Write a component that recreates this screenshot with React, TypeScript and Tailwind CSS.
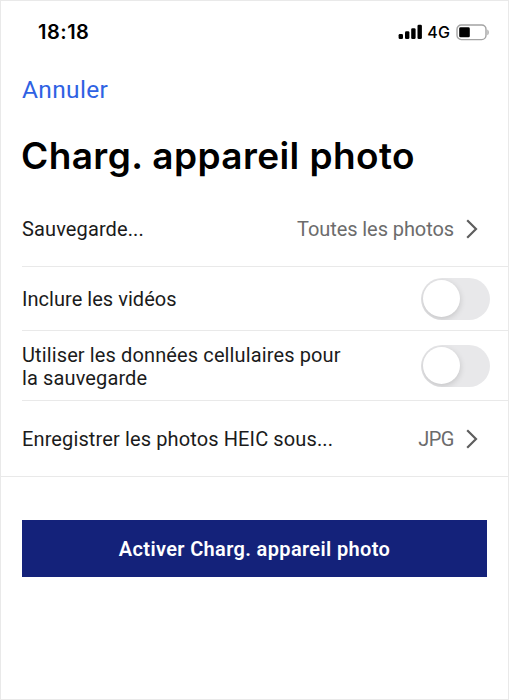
import { useState } from "react";

interface SwitchProps {
  checked: boolean;
  label: string;
  onChange: () => void;
}

const StatusBar = () => (
  <div className="flex h-[62px] items-center justify-between pr-[18px] pl-[37px] font-['Inter'] text-black">
    <span className="text-[20px] leading-none font-semibold tracking-[0.5px]">18:18</span>
    <div className="flex items-center">
      <svg width="25" height="16" viewBox="0 0 25 16" fill="currentColor">
        <rect x="0.6" y="10" width="4.4" height="5" rx="1.3" />
        <rect x="7" y="7.3" width="4.4" height="7.7" rx="1.3" />
        <rect x="13.2" y="4.2" width="4.4" height="10.8" rx="1.3" />
        <rect x="19.5" y="0.8" width="4.4" height="14.2" rx="1.3" />
      </svg>
      <span className="ml-[4px] text-[16px] leading-none font-medium">4G</span>
      <svg className="ml-[6px]" width="34" height="17" viewBox="0 0 34 17">
        <rect x="1" y="1" width="29" height="14.6" rx="4.3" fill="none" stroke="#a3a3a3" strokeWidth="1.4" />
        <rect x="3.2" y="3.3" width="10.6" height="10" rx="1.4" fill="#000" />
        <path d="M31.4 5.4c1.8.8 1.8 5 0 5.8z" fill="#a3a3a3" />
      </svg>
    </div>
  </div>
);

const Chevron = () => (
  <svg width="14" height="22" viewBox="0 0 14 22" fill="none" stroke="#5e5e5e" strokeWidth="2.2">
    <path d="M2.2 2.2 11 11 2.2 19.8" />
  </svg>
);

const Switch = ({ checked, label, onChange }: SwitchProps) => (
  <button
    role="switch"
    aria-checked={checked}
    aria-label={label}
    onClick={onChange}
    className={`flex h-[42px] w-[69px] shrink-0 items-center overflow-hidden rounded-full px-[2px] ${
      checked ? "justify-end bg-[#14227a]" : "bg-[#e8e8ea]"
    }`}
  >
    <span className="h-[37px] w-[37px] rounded-full bg-white shadow-[0_2px_6px_rgba(0,0,0,0.16)]" />
  </button>
);

export default function App() {
  const [videos, setVideos] = useState(false);
  const [cellular, setCellular] = useState(false);

  return (
    <div className="h-[700px] w-[509px] border border-[#e9e9e9] bg-white font-['Roboto',sans-serif] text-[20px] tracking-[0.12px] text-[#1b1b1b]">
      <StatusBar />

      <div className="flex h-[54px] items-center pl-[21px]">
        <button className="text-[24.5px] leading-none tracking-[0.35px] text-[#2f62e3]">Annuler</button>
      </div>
      <h1 className="flex h-[76px] items-center pl-[20px] font-['Inter'] text-[37px] leading-none font-semibold tracking-[0.4px] whitespace-nowrap text-black">
        Charg. appareil photo
      </h1>

      <div className="pl-[21px]">
        <div className="flex h-[74px] items-center justify-between border-b border-[#e9e9e9] pr-[29px] pb-[2px]">
          <span>Sauvegarde...</span>
          <div className="flex items-center gap-[11px] text-[#6c6c6c]">
            <span className="tracking-[-0.08px]">Toutes les photos</span>
            <Chevron />
          </div>
        </div>
        <div className="flex h-[64px] items-center justify-between border-b border-[#e9e9e9] pr-[18px]">
          <span className="pt-px tracking-[0.04px]">Inclure les vidéos</span>
          <Switch checked={videos} label="Inclure les vidéos" onChange={() => setVideos(!videos)} />
        </div>
        <div className="flex h-[70px] items-center justify-between border-b border-[#e9e9e9] pr-[18px]">
          <p className="pt-[2px] leading-[23px]">
            Utiliser les données cellulaires pour
            <br />
            la sauvegarde
          </p>
          <Switch checked={cellular} label="Utiliser les données cellulaires" onChange={() => setCellular(!cellular)} />
        </div>
      </div>
      <div className="flex h-[76px] items-center justify-between border-b border-[#e9e9e9] pr-[29px] pl-[21px]">
        <span>Enregistrer les photos HEIC sous...</span>
        <div className="flex items-center gap-[11px] text-[#6c6c6c]">
          <span className="tracking-[-0.5px]">JPG</span>
          <Chevron />
        </div>
      </div>

      <button className="mt-[43px] ml-[21px] flex h-[57px] w-[465px] items-center justify-center bg-[#14227a] text-[20px] font-semibold tracking-[0.35px] text-white">
        Activer Charg. appareil photo
      </button>
    </div>
  );
}
